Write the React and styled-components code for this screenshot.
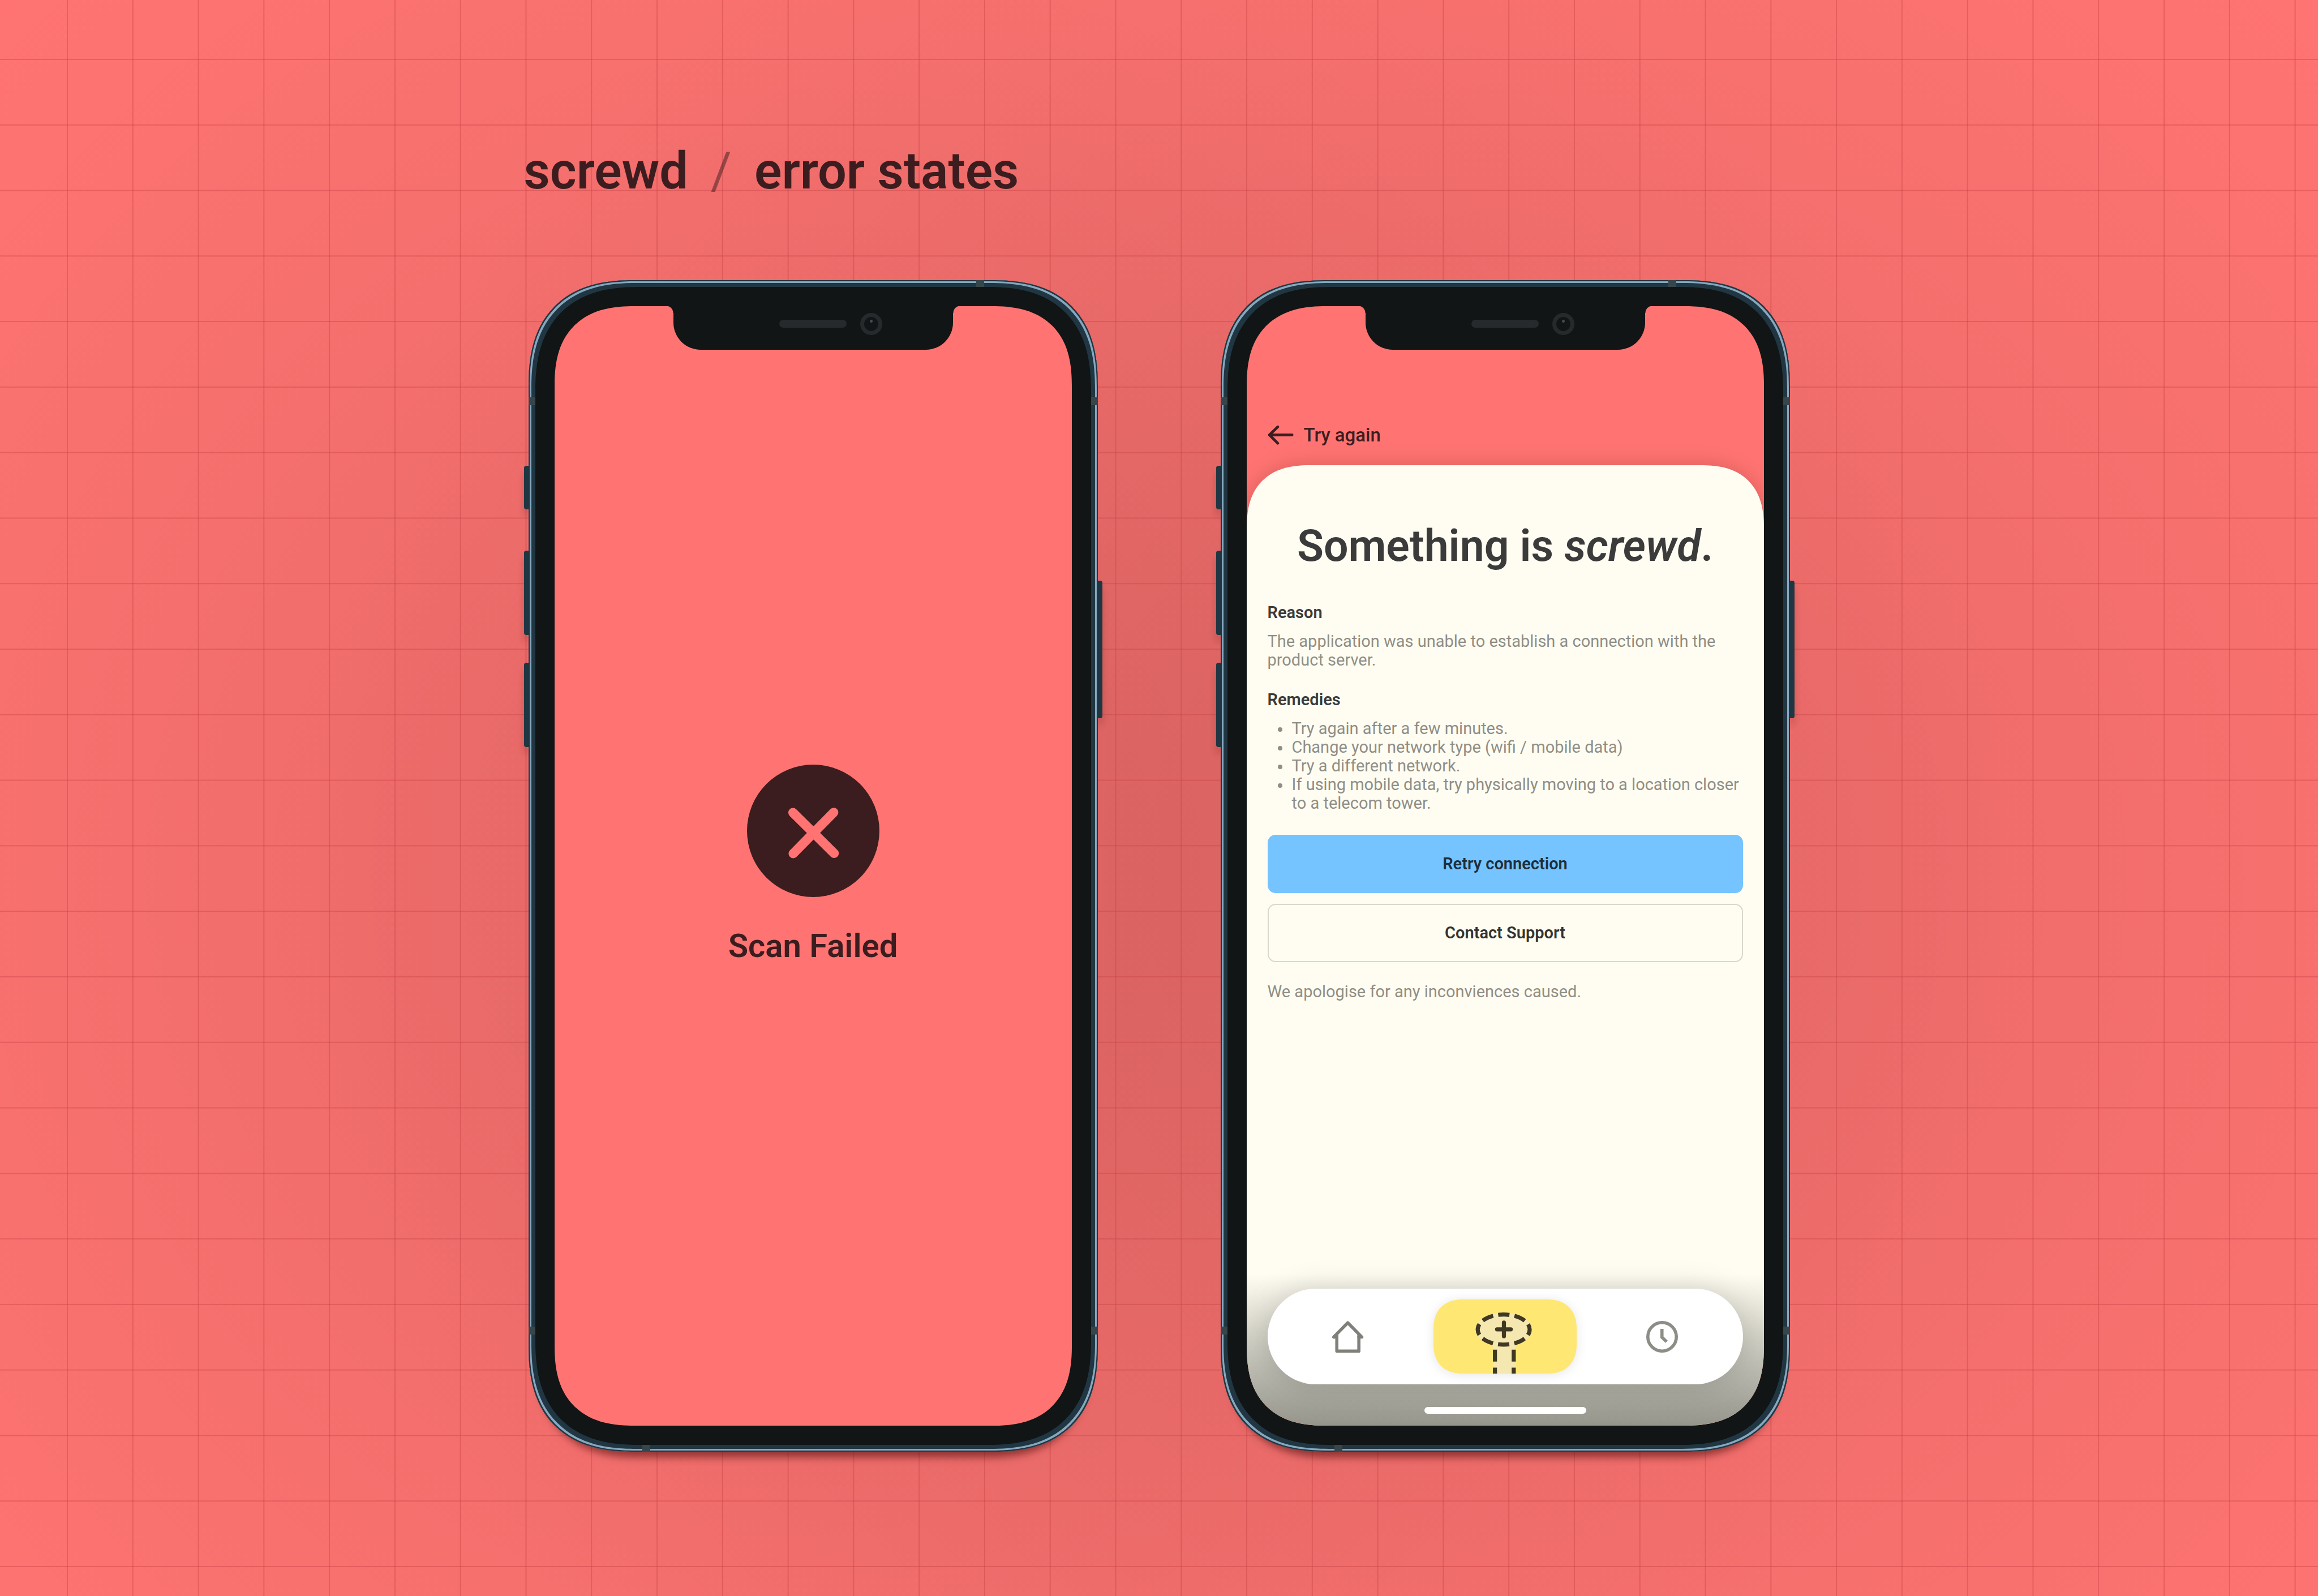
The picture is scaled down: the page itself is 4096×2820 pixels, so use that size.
import React from 'react';
import styled, { createGlobalStyle } from 'styled-components';

const color = {
  coral: '#ff7472',
  maroon: '#3c1d1f',
  ink: '#3b3b3b',
  muted: '#8f8e87',
  paper: '#fffdf1',
  sky: '#76c4ff',
  lemon: '#fee773',
  bezel: '#111515',
  steel: '#203642',
};

const GlobalStyle = createGlobalStyle`
  *, *::before, *::after { box-sizing: border-box; }
  body {
    margin: 0;
    background: ${color.coral};
    font-family: Roboto, "Liberation Sans", Arial, sans-serif;
    color: ${color.ink};
  }
  h1, h2, h3, p, ul { margin: 0; padding: 0; }
  button { font: inherit; color: inherit; cursor: pointer; }
`;

/* ---------- canvas ---------- */

// Soft ambient shade that each phone throws on the wall behind it.
const shade = (x) => `radial-gradient(
  circle at ${x} 55%,
  rgba(0, 0, 0, 0.078) 0,
  rgba(0, 0, 0, 0.075) 600px,
  rgba(0, 0, 0, 0.06) 900px,
  rgba(0, 0, 0, 0.038) 1300px,
  rgba(0, 0, 0, 0.021) 1650px,
  rgba(0, 0, 0, 0) 2150px
)`;

const Page = styled.main`
  --cell: calc(100vw * 48 / 1698);
  --line: rgba(200, 64, 68, 0.4);
  position: relative;
  isolation: isolate;
  min-height: 100vh;
  padding: 251px 40px 200px;
  display: flex;
  justify-content: center;
  overflow: hidden;
  background:
    ${shade('calc(50% - 611px)')},
    ${shade('calc(50% + 611px)')},
    ${color.coral};

  &::before,
  &::after {
    content: '';
    position: absolute;
    z-index: -1;
    background-size: var(--cell) var(--cell);
  }
  &::before {
    inset: 0 0 0 118px;
    background-image: linear-gradient(90deg, var(--line) 2px, transparent 2px);
  }
  &::after {
    inset: 104px 0 0;
    background-image: linear-gradient(var(--line) 2px, transparent 2px);
  }
`;

const Board = styled.div`
  display: flex;
  flex-direction: column;
  gap: 140px;
`;

const BoardTitle = styled.h1`
  display: flex;
  gap: 40px;
  font-size: 90px;
  line-height: 104px;
  font-weight: 600;
  color: ${color.maroon};
`;

const Slash = styled.span`
  font-weight: 400;
  opacity: 0.5;
`;

const Devices = styled.div`
  display: flex;
  gap: 201px;
`;

/* ---------- phone hardware ---------- */

const Phone = styled.section`
  display: flex;
  align-items: flex-start;
`;

const Keys = styled.div`
  width: 8px;
  display: flex;
  flex-direction: column;
`;

const Key = styled.span`
  height: ${(p) => p.$length}px;
  margin-top: ${(p) => p.$gap}px;
  background: ${color.steel};
  border-radius: ${(p) => (p.$side === 'left' ? '4px 0 0 4px' : '0 4px 4px 0')};
  box-shadow: 0 12px 12px rgba(60, 0, 0, 0.2);
`;

const Frame = styled.div`
  position: relative;
  width: 1006px;
  height: 2070px;
  padding: 46px;
  border-radius: 188px;
  corner-shape: superellipse(1.3);
  background: ${color.bezel};
  box-shadow:
    inset 0 0 0 2px #24343f,
    inset 0 0 0 5px #86a8be,
    inset 0 0 0 12px ${color.steel},
    0 24px 14px -14px rgba(60, 0, 0, 0.5);
`;

const Band = styled.span`
  position: absolute;
  background: #37464b;
  ${(p) =>
    p.$edge === 'top' || p.$edge === 'bottom'
      ? `width: 14px; height: 12px; ${p.$edge}: 0;`
      : `width: 12px; height: 14px; ${p.$edge}: 0;`}
  ${(p) => p.$from}: ${(p) => p.$at}px;
`;

const Screen = styled.div`
  position: relative;
  height: 100%;
  display: flex;
  flex-direction: column;
  overflow: hidden;
  border-radius: 141px;
  corner-shape: superellipse(1.3);
  background: ${color.coral};
`;

const Notch = styled.div`
  position: absolute;
  z-index: 2;
  top: -1px;
  left: 50%;
  transform: translateX(-50%);
  width: 494px;
  height: 78px;
  padding-bottom: 14px;
  display: grid;
  grid-template-columns: 1fr 119px 1fr;
  column-gap: 24px;
  align-items: center;
  background: ${color.bezel};
  border-radius: 0 0 48px 48px;

  &::before,
  &::after {
    content: '';
    position: absolute;
    top: 0;
    width: 13px;
    height: 13px;
  }
  &::before {
    right: 100%;
    background: radial-gradient(circle at 0 100%, transparent 12px, ${color.bezel} 13px);
  }
  &::after {
    left: 100%;
    background: radial-gradient(circle at 100% 100%, transparent 12px, ${color.bezel} 13px);
  }
`;

const Speaker = styled.span`
  grid-column: 2;
  height: 14px;
  border-radius: 7px;
  background: #262a2c;
`;

const Camera = styled.span`
  width: 39px;
  height: 39px;
  border: 7px solid #262a2c;
  border-radius: 50%;
  background: radial-gradient(circle at 50% 30%, #474b4d 2px, transparent 3px);
`;

/* ---------- scan failed ---------- */

const Failure = styled.div`
  flex: 1;
  padding-bottom: 4px;
  display: flex;
  flex-direction: column;
  align-items: center;
  justify-content: center;
  gap: 52px;
`;

const FailureMark = styled.svg`
  width: 234px;
  height: 234px;
`;

const FailureTitle = styled.h2`
  font-size: 58px;
  line-height: 68px;
  font-weight: 600;
  color: ${color.maroon};
`;

/* ---------- error details ---------- */

const BackLink = styled.a`
  height: 281px;
  padding: 177px 37px 3px;
  display: flex;
  align-items: center;
  gap: 18px;
  font-size: 33px;
  line-height: 40px;
  font-weight: 500;
  color: ${color.maroon};
  text-decoration: none;
`;

const BackArrow = styled.svg`
  width: 46px;
  height: 35px;
`;

const Sheet = styled.article`
  flex: 1;
  padding: 98px 37px 0;
  background: ${color.paper};
  border-radius: 112px 112px 0 0;
  corner-shape: superellipse(1.3);
  box-shadow: 0 0 36px rgba(60, 0, 0, 0.2);
`;

const SheetTitle = styled.h2`
  margin-bottom: 56px;
  font-size: 77px;
  line-height: 90px;
  font-weight: 600;
  text-align: center;
`;

const Block = styled.section`
  display: flex;
  flex-direction: column;
  gap: 18px;
  margin-bottom: 37px;
`;

const Label = styled.h3`
  font-size: 29px;
  line-height: 33px;
  font-weight: 600;
`;

const Copy = styled.p`
  font-size: 29px;
  line-height: 33px;
  color: ${color.muted};
`;

const Remedies = styled.ul`
  list-style: none;
  font-size: 29px;
  line-height: 33px;
  color: ${color.muted};
`;

const Remedy = styled.li`
  display: flex;
  gap: 17px;
  padding-left: 18px;

  &::before {
    content: '';
    flex: none;
    width: 8px;
    height: 8px;
    margin-top: 14px;
    border-radius: 50%;
    background: currentColor;
  }
`;

const Actions = styled.div`
  display: flex;
  flex-direction: column;
  gap: 19px;
  margin: 39px 0 36px;
`;

const Action = styled.button`
  height: 103px;
  border: 2px solid ${(p) => (p.$primary ? color.sky : '#dad8cc')};
  border-radius: 14px;
  background: ${(p) => (p.$primary ? color.sky : 'transparent')};
  color: ${(p) => (p.$primary ? '#1d2f3d' : '#333331')};
  font-size: 29px;
  line-height: 33px;
  font-weight: 600;
`;

/* ---------- bottom navigation ---------- */

const Dock = styled.div`
  position: absolute;
  inset: auto 0 0;
  padding: 26px 37px 21px;
  display: flex;
  flex-direction: column;
  align-items: center;
  gap: 40px;
  background: linear-gradient(rgba(10, 12, 6, 0), rgba(10, 12, 6, 0.43));
`;

const Nav = styled.nav`
  width: 100%;
  padding: 19px 0;
  display: grid;
  grid-template-columns: 1fr 253px 1fr;
  column-gap: 8px;
  align-items: center;
  justify-items: center;
  border-radius: 85px;
  background: #fff;
  box-shadow: 0 4px 56px rgba(0, 0, 0, 0.17);
`;

const NavButton = styled.button`
  display: flex;
  padding: 0;
  border: 0;
  background: none;
  color: ${(p) => p.$tone};
`;

const NavIcon = styled.svg`
  width: 56px;
  height: 56px;
`;

const ScanButton = styled.button`
  width: 100%;
  height: 131px;
  padding: 0;
  border: 0;
  border-radius: 52px;
  corner-shape: superellipse(1.2);
  overflow: hidden;
  background: ${color.lemon};
  box-shadow: 0 2px 20px rgba(0, 0, 0, 0.1);
`;

const ScanArt = styled.svg`
  display: block;
  width: 100%;
  height: 100%;
`;

const HomeIndicator = styled.span`
  width: 286px;
  height: 12px;
  border-radius: 6px;
  background: #fff;
`;

function Device({ label, children }) {
  return (
    <Phone aria-label={label}>
      <Keys>
        <Key $side="left" $gap={328} $length={77} />
        <Key $side="left" $gap={73} $length={149} />
        <Key $side="left" $gap={49} $length={149} />
      </Keys>
      <Frame>
        <Screen>
          <Notch>
            <Speaker />
            <Camera />
          </Notch>
          {children}
        </Screen>
        <Band $edge="top" $from="right" $at={201} />
        <Band $edge="bottom" $from="left" $at={201} />
        <Band $edge="left" $from="top" $at={207} />
        <Band $edge="right" $from="top" $at={207} />
        <Band $edge="left" $from="bottom" $at={207} />
        <Band $edge="right" $from="bottom" $at={207} />
      </Frame>
      <Keys>
        <Key $side="right" $gap={531} $length={243} />
      </Keys>
    </Phone>
  );
}

const remedies = [
  'Try again after a few minutes.',
  'Change your network type (wifi / mobile data)',
  'Try a different network.',
  'If using mobile data, try physically moving to a location closer to a telecom tower.',
];

export default function App() {
  return (
    <>
      <GlobalStyle />
      <Page>
        <Board>
          <BoardTitle>
            <span>screwd</span>
            <Slash>/</Slash>
            <span>error states</span>
          </BoardTitle>
          <Devices>
            <Device label="Scan failed">
              <Failure>
                <FailureMark viewBox="0 0 291 291" aria-hidden="true">
                  <circle cx="145.5" cy="145.5" r="145.5" fill={color.maroon} />
                  <path
                    d="M101 105.5 191.5 195M190.5 105 101.5 195.5"
                    stroke={color.coral}
                    strokeWidth="20.5"
                    strokeLinecap="round"
                  />
                </FailureMark>
                <FailureTitle>Scan Failed</FailureTitle>
              </Failure>
            </Device>

            <Device label="Error details">
              <BackLink href="#scan">
                <BackArrow viewBox="0 0 58 43" fill="none" aria-hidden="true">
                  <path
                    d="M22.5 3.5 4 21.5 22.5 40M4 21.5H54.5"
                    stroke="currentColor"
                    strokeWidth="6"
                    strokeLinecap="round"
                    strokeLinejoin="round"
                  />
                </BackArrow>
                Try again
              </BackLink>
              <Sheet>
                <SheetTitle>
                  Something is <em>screwd</em>.
                </SheetTitle>
                <Block>
                  <Label>Reason</Label>
                  <Copy>
                    The application was unable to establish a connection with the product server.
                  </Copy>
                </Block>
                <Block>
                  <Label>Remedies</Label>
                  <Remedies>
                    {remedies.map((text) => (
                      <Remedy key={text}>
                        <span>{text}</span>
                      </Remedy>
                    ))}
                  </Remedies>
                </Block>
                <Actions>
                  <Action type="button" $primary>Retry connection</Action>
                  <Action type="button">Contact Support</Action>
                </Actions>
                <Copy>We apologise for any inconviences caused.</Copy>
              </Sheet>
              <Dock>
                <Nav aria-label="Main">
                  <NavButton type="button" aria-label="Home" $tone="#80807a">
                    <NavIcon viewBox="0 0 70 70" fill="none" stroke="currentColor" strokeWidth="7">
                      <path
                        d="M10 35.5H3.5L34.5 4 65.5 35.5H59"
                        strokeLinecap="round"
                        strokeLinejoin="round"
                      />
                      <path d="M10.3 30V66.5H59V30" strokeLinejoin="round" />
                    </NavIcon>
                  </NavButton>
                  <ScanButton type="button" aria-label="Scan">
                    <ScanArt viewBox="0 0 314 163" preserveAspectRatio="xMidYMax slice" fill="none">
                      <ellipse cx="154" cy="66.5" rx="61.5" ry="37.5" fill="#f5e7b0" />
                      <path d="M130.3 92H180.3V163H130.3Z" fill="#f5e7b0" />
                      <g stroke="#3f3823" strokeWidth="9">
                        <ellipse
                          cx="154"
                          cy="66.5"
                          rx="57"
                          ry="33"
                          pathLength="288"
                          strokeDasharray="25 11"
                          strokeDashoffset="12.5"
                        />
                        <path d="M134.8 110.5V136.5M134.8 150V163M176 110.5V136.5M176 150V163" />
                        <path d="M154.5 51V81M139.5 66H169.5" strokeLinecap="round" />
                      </g>
                    </ScanArt>
                  </ScanButton>
                  <NavButton type="button" aria-label="History" $tone="#8d8d87">
                    <NavIcon viewBox="0 0 70 70" fill="none" stroke="currentColor" strokeWidth="7">
                      <circle cx="35" cy="35" r="31.5" />
                      <path d="M34.7 17.5V36L45 46" />
                    </NavIcon>
                  </NavButton>
                </Nav>
                <HomeIndicator />
              </Dock>
            </Device>
          </Devices>
        </Board>
      </Page>
    </>
  );
}
